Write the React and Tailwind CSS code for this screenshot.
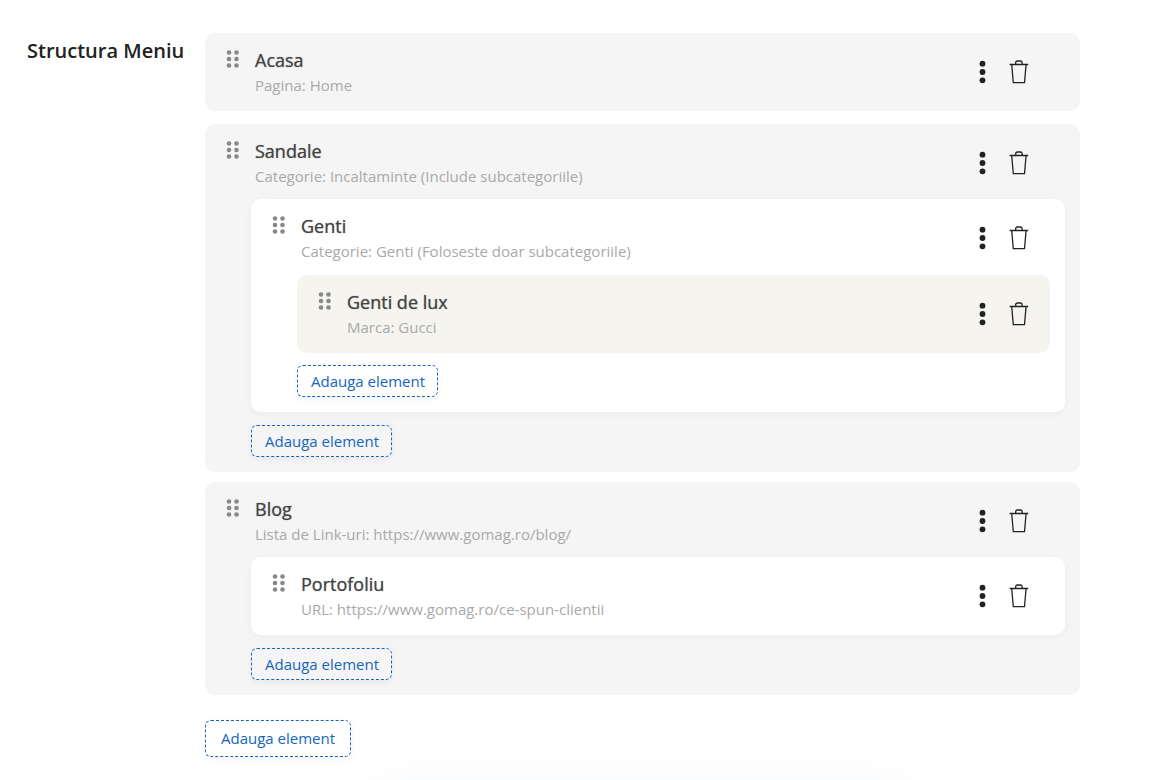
const menu = [
  { title: 'Acasa', info: 'Pagina: Home' },
  {
    title: 'Sandale',
    info: 'Categorie: Incaltaminte (Include subcategoriile)',
    children: [
      {
        title: 'Genti',
        info: 'Categorie: Genti (Foloseste doar subcategoriile)',
        children: [{ title: 'Genti de lux', info: 'Marca: Gucci' }],
      },
    ],
  },
  {
    title: 'Blog',
    info: 'Lista de Link-uri: https://www.gomag.ro/blog/',
    children: [{ title: 'Portofoliu', info: 'URL: https://www.gomag.ro/ce-spun-clientii' }],
  },
]

// one entry per nesting level; the row padding keeps the actions in one column
const levels = [
  { card: 'bg-[#f5f5f5]', row: 'pr-[51px]', rowHeight: 'h-[75px]', list: 'mb-[13px]' },
  { card: 'bg-white shadow-[0_2px_8px_rgba(0,0,0,0.04)]', row: 'pr-9', rowHeight: 'h-[76px]', list: 'mb-3' },
  { card: 'bg-[#f5f4ee]', row: 'pr-[21px]', rowHeight: 'h-[76px]', list: 'mb-3' },
]

function GripIcon() {
  return (
    <svg width="14" height="20" viewBox="0 0 14 20" fill="#888" aria-hidden="true">
      {[3.5, 10, 16.5].map((y) => (
        <g key={y}>
          <circle cx="3" cy={y} r="2.3" />
          <circle cx="10.5" cy={y} r="2.3" />
        </g>
      ))}
    </svg>
  )
}

function DotsIcon() {
  return (
    <svg width="8" height="24" viewBox="0 0 8 24" fill="#212126" aria-hidden="true">
      <circle cx="4.5" cy="3.7" r="2.9" />
      <circle cx="4.5" cy="12" r="2.9" />
      <circle cx="4.5" cy="20.3" r="2.9" />
    </svg>
  )
}

function TrashIcon() {
  return (
    <svg width="20" height="24" viewBox="0 0 20 24" fill="none" stroke="#212126" strokeWidth="1.3" aria-hidden="true">
      <path d="M.6 4.5h18.6M2.7 4.5l1.600 18.200h11.200l1.600-18.200M6.700 4.500V2.700Q6.700 1 8.400 1h3Q13.100 1 13.100 2.700v1.800" />
    </svg>
  )
}

function AddButton({ large }) {
  return (
    <button
      type="button"
      className={
        'block rounded-md border border-dashed border-[#1565c0] text-[15px] leading-5 text-[#1565c0] shadow-[0_2px_6px_rgba(0,0,0,0.06)] ' +
        (large ? 'px-[15px] pt-[7px] pb-2' : 'pr-3 pl-[13px] py-[5px]')
      }
    >
      Adauga element
    </button>
  )
}

function MenuItem({ item, level = 0 }) {
  const styles = levels[level]
  return (
    <li className={'rounded-[10px] ' + styles.card + (level === 0 ? (item.children ? ' mb-[10px]' : ' mb-[13px]') : '')}>
      <div className={'flex pl-[21px] ' + styles.row + ' ' + (item.children ? styles.rowHeight : 'h-[78px]')}>
        <button type="button" aria-label={'Muta ' + item.title} className="mt-4 h-5 shrink-0 cursor-move">
          <GripIcon />
        </button>
        <div className="ml-[15px] min-w-0 flex-1 pt-[15px]">
          <h3 className="text-[18px] leading-6 font-medium text-[#444] [text-shadow:0_0_1px_#777]">{item.title}</h3>
          <p className="mt-[3px] text-[15px] leading-5 text-[#a9a9a9]">{item.info}</p>
        </div>
        <div className="mt-[27px] flex h-6 gap-[23px]">
          <button type="button" aria-label={'Optiuni ' + item.title}>
            <DotsIcon />
          </button>
          <button type="button" aria-label={'Sterge ' + item.title}>
            <TrashIcon />
          </button>
        </div>
      </div>
      {item.children && (
        <div className="pr-[15px] pb-[15px] pl-[46px]">
          <ul className={styles.list}>
            {item.children.map((child) => (
              <MenuItem key={child.title} item={child} level={level + 1} />
            ))}
          </ul>
          <AddButton />
        </div>
      )}
    </li>
  )
}

export default function App() {
  return (
    <div className="flex h-screen overflow-hidden bg-white pt-[33px] pr-[81px] font-['Open_Sans',sans-serif]">
      <h2 className="w-[205px] shrink-0 pt-1 pl-[27px] text-[20px] leading-7 font-semibold text-[#212121]">
        Structura Meniu
      </h2>
      <div className="min-w-0 flex-1">
        <ul className="flex flex-col pb-[15px]">
          {menu.map((item) => (
            <MenuItem key={item.title} item={item} />
          ))}
        </ul>
        <AddButton large />
        <div className="mx-auto mt-10 h-14 w-[540px] rounded-full bg-white shadow-[0_0_50px_rgba(30,80,160,0.08)]" />
      </div>
    </div>
  )
}
